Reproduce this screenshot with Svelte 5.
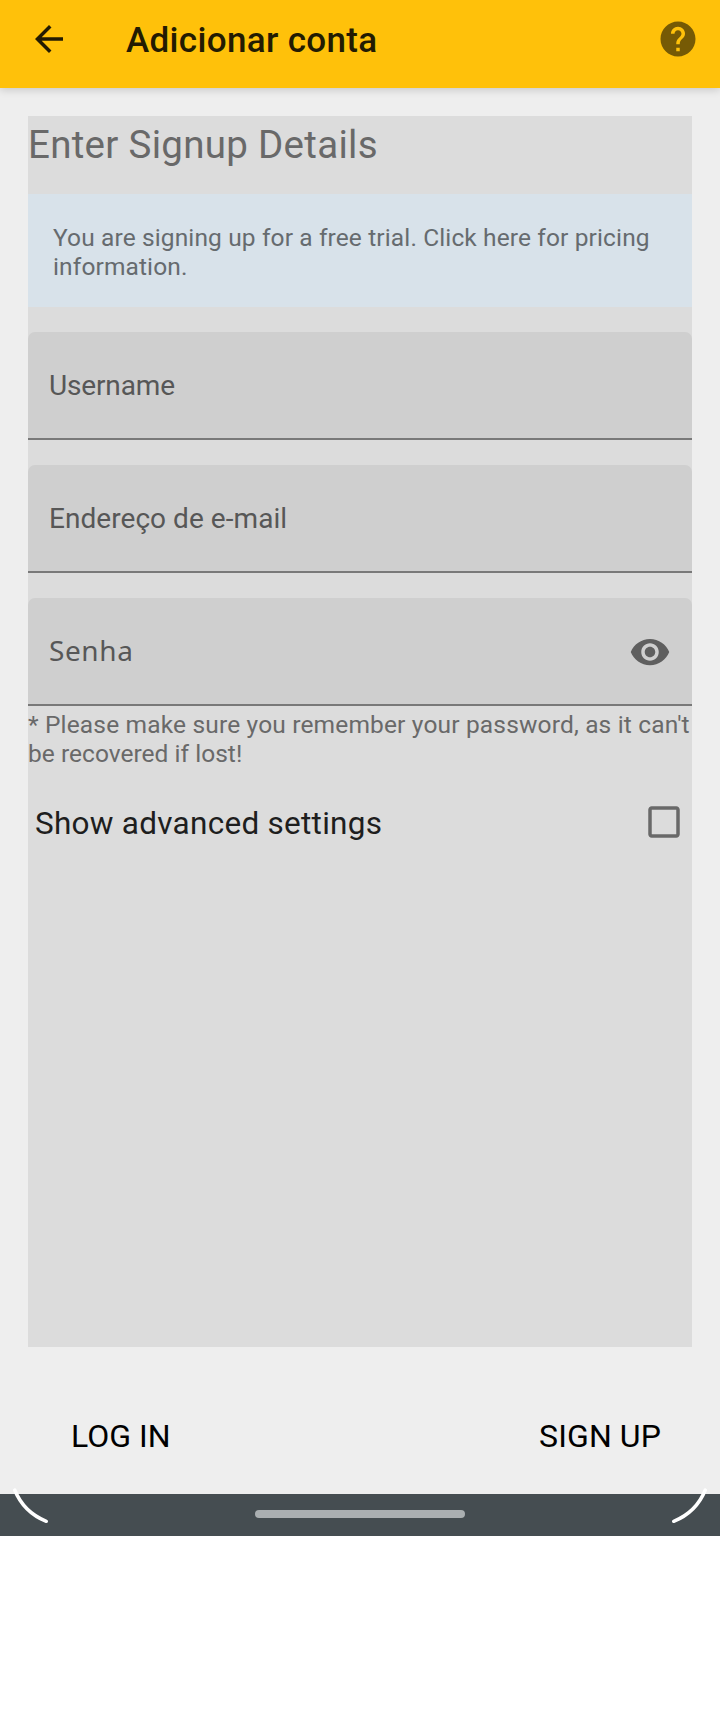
<script>
  const fields = [
    { label: 'Username', kind: 'username' },
    { label: 'Endereço de e-mail', kind: 'email' },
    { label: 'Senha', kind: 'password' }
  ];
</script>

<div class="screen">
  <header>
    <svg class="icon back" viewBox="0 0 24 24"><path d="M20 11H7.83l5.59-5.59L12 4l-8 8 8 8 1.41-1.41L7.83 13H20v-2z" /></svg>
    <h1>Adicionar conta</h1>
    <svg class="icon help" viewBox="0 0 24 24"><path d="M12 2C6.48 2 2 6.48 2 12s4.48 10 10 10 10-4.48 10-10S17.52 2 12 2zm1 17h-2v-2h2v2zm2.07-7.75l-.9.92C13.45 12.9 13 13.5 13 15h-2v-.5c0-1.1.45-2.1 1.17-2.83l1.24-1.26c.37-.36.59-.86.59-1.41 0-1.1-.9-2-2-2s-2 .9-2 2H8c0-2.21 1.79-4 4-4s4 1.79 4 4c0 .88-.36 1.68-.93 2.25z" /></svg>
  </header>

  <main>
    <h2>Enter Signup Details</h2>
    <p class="notice">You are signing up for a free trial. Click here for pricing<br />information.</p>
    <div class="fields">
      {#each fields as field}
        <div class="field {field.kind}">
          <span>{field.label}</span>
          {#if field.kind === 'password'}
            <svg class="icon" viewBox="0 0 24 24"><path d="M12 4.5C7 4.5 2.73 7.61 1 12c1.73 4.39 6 7.5 11 7.5s9.27-3.11 11-7.5c-1.73-4.39-6-7.5-11-7.5zM12 17c-2.76 0-5-2.24-5-5s2.24-5 5-5 5 2.24 5 5-2.24 5-5 5zm0-8c-1.66 0-3 1.34-3 3s1.34 3 3 3 3-1.34 3-3-1.34-3-3-3z" /></svg>
          {/if}
        </div>
      {/each}
    </div>
    <p class="hint">* Please make sure you remember your password, as it can't<br /><span>be recovered if lost!</span></p>
    <div class="advanced">
      <span>Show advanced settings</span>
      <svg class="icon checkbox" viewBox="0 0 24 24"><path d="M19 5v14H5V5h14m0-2H5c-1.1 0-2 .9-2 2v14c0 1.1.9 2 2 2h14c1.1 0 2-.9 2-2V5c0-1.1-.9-2-2-2z" /></svg>
    </div>
  </main>

  <footer>
    <span>LOG IN</span>
    <span class="signup">SIGN UP</span>
  </footer>

  <nav>
    <svg class="corner left" viewBox="0 0 60 60"><path d="M14.7 10Q23.8 32.3 46.3 41.3" /></svg>
    <div class="pill"></div>
    <svg class="corner right" viewBox="0 0 60 60"><path d="M14.7 10Q23.8 32.3 46.3 41.3" /></svg>
  </nav>
</div>

<style>
  :global(body) { margin: 0; background: #fff; }
  .screen {
    width: 720px;
    height: 1536px;
    display: flex;
    flex-direction: column;
    background: #eee;
    font-family: Roboto, sans-serif;
  }
  h1, h2, p { margin: 0; font-weight: 400; }
  .icon { width: 42px; height: 42px; flex: none; display: block; }
  header {
    height: 88px;
    box-sizing: border-box;
    flex: none;
    padding: 18px 21px 0 28px;
    display: flex;
    align-items: flex-start;
    background: #ffc10a;
    box-shadow: 0 2px 8px rgba(0, 0, 0, 0.16);
  }
  h1 {
    flex: 1;
    margin-left: 56px;
    font-size: 35px;
    font-weight: 500;
    letter-spacing: 0.34px;
    line-height: 46px;
    color: #231b02;
    white-space: nowrap;
  }
  .back { fill: #231b02; }
  .help { fill: #765a05; }
  main {
    margin: 28px 28px 0;
    height: 1231px;
    flex: none;
    background: #dcdcdc;
    color: #696969;
  }
  h2 { height: 76px; font-size: 38.5px; letter-spacing: 0.29px; line-height: 58px; padding-bottom: 2px; white-space: nowrap; }
  .notice {
    height: 113px;
    box-sizing: border-box;
    padding: 29px 0 0 25px;
    background: #d8e2ea;
    color: #666b6f;
    font-size: 24.5px;
    letter-spacing: 0.125px;
    line-height: 29px;
    white-space: nowrap;
  }
  .fields { display: flex; flex-direction: column; gap: 25px; padding-top: 25px; }
  .field {
    height: 108px;
    box-sizing: border-box;
    padding: 0 21px;
    display: flex;
    align-items: center;
    justify-content: space-between;
    background: linear-gradient(#797979, #797979) bottom / 100% 2px no-repeat #cfcfcf;
    border-radius: 7px 7px 0 0;
    color: #575757;
    font-size: 28px;
    line-height: 40px;
  }
  .username { letter-spacing: -0.15px; }
  .email { letter-spacing: 0.05px; }
  .password span { padding-bottom: 4px; font-family: "Noto Sans", sans-serif; letter-spacing: 0.6px; }
  .field .icon { fill: #5f5f5f; }
  .hint { padding-top: 4px; font-size: 24.5px; letter-spacing: 0.165px; line-height: 29px; white-space: nowrap; }
  .hint span { letter-spacing: 0.03px; }
  .advanced {
    height: 60px;
    margin-top: 24px;
    padding: 0 7px;
    display: flex;
    align-items: center;
    justify-content: space-between;
    color: #1e1e1e;
    font-size: 31.5px;
    letter-spacing: 0.27px;
    line-height: 40px;
  }
  .advanced span { padding-top: 3px; }
  .checkbox { fill: #696969; }
  footer {
    height: 147px;
    flex: none;
    box-sizing: border-box;
    padding: 69px 59px 0 71px;
    display: flex;
    justify-content: space-between;
    font-size: 32px;
    line-height: 40px;
    color: #000;
  }
  .signup { letter-spacing: 0.1px; }
  nav {
    position: relative;
    height: 42px;
    flex: none;
    display: flex;
    align-items: center;
    justify-content: center;
    background: #454d51;
  }
  .pill { width: 210px; height: 8px; margin-top: -2px; border-radius: 4px; background: #aaafb1; }
  .corner { position: absolute; top: -14px; width: 60px; height: 60px; fill: none; stroke: #fff; stroke-width: 3.5; stroke-linecap: round; }
  .left { left: 0; }
  .right { right: 0; transform: scaleX(-1); }
</style>
